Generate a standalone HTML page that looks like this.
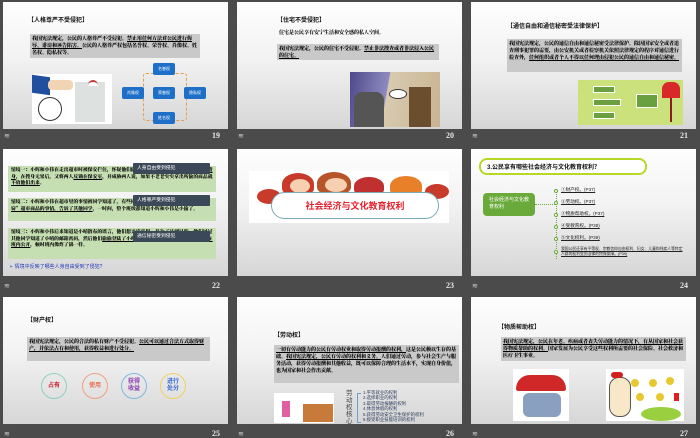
<!DOCTYPE html>
<html><head><meta charset="utf-8"><style>
*{margin:0;padding:0;box-sizing:border-box}
body{width:700px;height:438px;background:#4b4b4b;position:relative;overflow:hidden;font-family:"Liberation Sans","Noto Sans CJK SC",sans-serif}
.s{position:absolute;width:225px;height:127px;background:linear-gradient(#fefefe 0%,#f2f2f2 45%,#d6d6d6 100%);overflow:hidden}
.s>*{position:absolute}
.n{position:absolute;color:#e8e8e8;font-size:8px;font-weight:bold;font-family:"Liberation Serif",serif}
.ic{position:absolute;color:#cfcfcf;font-size:7px}
.t{font-size:6px;font-weight:bold;color:#111;white-space:nowrap;font-family:"Liberation Sans","Noto Sans CJK SC",sans-serif}
.g{background:#c9c9c9;font-size:5px;line-height:7px;color:#000;padding:1px 2px;font-family:"Noto Serif CJK SC",serif;font-weight:900;overflow:hidden}
.b{background:#1d6fc8;color:#fff;font-size:4px;border-radius:2px;text-align:center;line-height:12px;width:22px;height:12px}
.gr{background:#c6dfb2;font-size:4.8px;line-height:6.5px;color:#000;padding:1px 3px;font-family:"Noto Serif CJK SC",serif;font-weight:900;overflow:hidden}
.dk{background:#3b4857;color:#fff;font-size:4.8px;line-height:11px;padding-left:4px;width:77px;height:11px;border-radius:1px}
.li{font-size:4.6px;color:#222;text-decoration:underline;white-space:nowrap}
.dot{width:4px;height:4px;border:1px solid #6aaa3a;border-radius:50%;background:#fff}
.c{width:26px;height:26px;border-radius:50%;border:1px solid;text-align:center;font-weight:bold;display:flex;align-items:center;justify-content:center;font-size:6px;line-height:7px}
</style></head><body>

<!-- 19 -->
<div class="s" style="left:3px;top:2px">
<div class="t" style="left:25px;top:13px">【人格尊严不受侵犯】</div>
<div class="g" style="left:27px;top:32px;width:170px;height:24px">我国宪法规定，公民的人格尊严不受侵犯。<u>禁止用任何方法对公民进行侮辱、诽谤和诬告陷害。</u>公民的人格尊严权包括名誉权、荣誉权、肖像权、姓名权、隐私权等。</div>
<div style="left:29px;top:72px;width:80px;height:50px;background:#fff"></div>
<div style="left:29px;top:74px;width:18px;height:18px;background:#1f4f9e;transform:skewY(8deg)"></div>
<div style="left:45px;top:78px;width:25px;height:10px;background:#f2d4b4;border-radius:4px"></div>
<div style="left:35px;top:95px;width:24px;height:24px;border:1px solid #333;border-radius:50%;background:#fff"></div>
<div style="left:72px;top:80px;width:30px;height:40px;background:#dde2e0"></div>
<div style="left:85px;top:78px;width:10px;height:6px;background:#fff;border-radius:5px 5px 0 0;border-top:2px solid #c33"></div>
<div style="left:140px;top:71px;width:44px;height:48px;border:1px dashed #e0a050;border-radius:3px"></div>
<div class="b" style="left:150px;top:61px">名誉权</div>
<div class="b" style="left:119px;top:85px">肖像权</div>
<div class="b" style="left:150px;top:85px">荣誉权</div>
<div class="b" style="left:181px;top:85px">隐私权</div>
<div class="b" style="left:150px;top:110px">姓名权</div>
</div>
<div class="ic" style="left:4px;top:132px">≋</div><div class="n" style="left:212px;top:131px">19</div>

<!-- 20 -->
<div class="s" style="left:237px;top:2px">
<div class="t" style="left:40px;top:13px">【住宅不受侵犯】</div>
<div class="t" style="left:42px;top:27px;font-size:5px;font-family:'Noto Serif CJK SC',serif;font-weight:900">住宅是公民享有安宁生活和安全感的私人空间。</div>
<div class="g" style="left:40px;top:42px;width:162px;height:16px">我国宪法规定，公民的住宅不受侵犯。<u>禁止非法搜查或者非法侵入公民的住宅。</u></div>
<div style="left:113px;top:70px;width:90px;height:55px;background:linear-gradient(100deg,#4e4a8a 0%,#8e8ac0 40%,#d8cab0 41%,#c9b490 100%)"></div>
<div style="left:172px;top:85px;width:22px;height:40px;background:#6a4e2e"></div>
<div style="left:117px;top:90px;width:30px;height:35px;background:#555;border-radius:8px 8px 0 0"></div>
<div style="left:152px;top:87px;width:18px;height:10px;background:#fff;border-radius:50%;border:1px solid #333"></div>
</div>
<div class="ic" style="left:238px;top:132px">≋</div><div class="n" style="left:446px;top:131px">20</div>

<!-- 21 -->
<div class="s" style="left:471px;top:2px">
<div class="t" style="left:36px;top:19px">【通信自由和通信秘密受法律保护】</div>
<div class="g" style="left:36px;top:37px;width:175px;height:33px">我国宪法规定，公民的通信自由和通信秘密受法律保护。除因国家安全或者追查刑事犯罪的需要，由公安机关或者检察机关依照法律规定的程序对通信进行检查外，<u>任何组织或者个人不得以任何理由侵犯公民的通信自由和通信秘密。</u></div>
<div style="left:107px;top:78px;width:105px;height:45px;background:#cbe27c"></div>
<div style="left:122px;top:84px;width:22px;height:7px;background:#6aa040;border:1px solid #fff"></div>
<div style="left:122px;top:97px;width:28px;height:7px;background:#6aa040;border:1px solid #fff"></div>
<div style="left:122px;top:110px;width:22px;height:7px;background:#6aa040;border:1px solid #fff"></div>
<div style="left:165px;top:92px;width:22px;height:14px;background:#6aa040;border:1px solid #fff"></div>
<div style="left:191px;top:80px;width:18px;height:16px;background:#d8282a;border-radius:7px 7px 0 0"></div>
<div style="left:199px;top:96px;width:2px;height:24px;background:#8b1e1e"></div>
</div>
<div class="ic" style="left:472px;top:132px">≋</div><div class="n" style="left:680px;top:131px">21</div>

<!-- 22 -->
<div class="s" style="left:3px;top:149px">
<div class="gr" style="left:5px;top:17px;width:208px;height:26px">情境一：小辉和小伟在走出超市时被保安拦住，怀疑他们偷拿了超市的商品而对他们<u>当众强制搜身</u>，在搜身无果后，又将两人<u>反锁在保安室</u>，并威胁两人说，如果不老老实实拿出所偷的商品就<u>不放他们出来</u>。</div>
<div class="gr" style="left:5px;top:49px;width:208px;height:23px">情境二：小辉和小伟在超市里的事情被同学知道了，有些同学<u>添油加醋，将小辉和小伟“偷窃”超市商品的事情，告诉了其他同学</u>，一时间，整个班级都知道小辉和小伟是小偷了。</div>
<div class="gr" style="left:5px;top:79px;width:208px;height:31px">情境三：小辉和小伟后来知道是小晴散布的谣言，他们想弄清真相。并为了达到目的，他们通过其他同学知道了小晴的邮箱密码，然后他们<u>偷偷登陆了小晴的邮箱，并下载了她的交往邮件，在班内公开</u>，顿时班内像炸了锅一样。</div>
<div class="dk" style="left:130px;top:14px">人身自由受到侵犯</div>
<div class="dk" style="left:130px;top:46px">人格尊严受到侵犯</div>
<div class="dk" style="left:130px;top:82px">通信秘密受到侵犯</div>
<div style="left:6px;top:114px;font-size:5px;color:#2438b8;white-space:nowrap">➢ 情境中反映了哪些人身自由受到了侵犯?</div>
</div>
<div class="ic" style="left:4px;top:282px">≋</div><div class="n" style="left:212px;top:281px">22</div>

<!-- 23 -->
<div class="s" style="left:237px;top:149px">
<div style="left:12px;top:22px;width:200px;height:52px;background:#fff"></div>
<div style="left:45px;top:24px;width:32px;height:22px;background:#c83a2a;border-radius:50% 50% 30% 30%"></div>
<div style="left:53px;top:30px;width:20px;height:14px;background:#f6d0b0;border-radius:50%"></div>
<div style="left:80px;top:23px;width:34px;height:22px;background:#b8542a;border-radius:50% 50% 30% 30%"></div>
<div style="left:88px;top:29px;width:22px;height:14px;background:#f6d0b0;border-radius:50%"></div>
<div style="left:117px;top:28px;width:30px;height:18px;background:#c03030;border-radius:50% 50% 30% 30%"></div>
<div style="left:153px;top:27px;width:32px;height:20px;background:#e8802a;border-radius:50% 50% 30% 30%"></div>
<div style="left:188px;top:35px;width:24px;height:15px;background:#c83a2a;border-radius:50%"></div>
<div style="left:20px;top:40px;width:24px;height:15px;background:#c83a2a;border-radius:50%"></div>
<div style="left:34px;top:43px;width:168px;height:27px;background:#fff;border:1px solid #7aa8b8;border-radius:14px"></div>
<div style="left:34px;top:50px;width:168px;text-align:center;font-size:9px;font-weight:bold;color:#e8202c;font-family:'Noto Sans CJK SC',sans-serif">社会经济与文化教育权利</div>
</div>
<div class="n" style="left:446px;top:281px">23</div>

<!-- 24 -->
<div class="s" style="left:471px;top:149px">
<div style="left:8px;top:9px;width:168px;height:17px;background:#fff;border:2px solid #b8d828;border-radius:8px"></div>
<div class="t" style="left:16px;top:13px">3.公民享有哪些社会经济与文化教育权利？</div>
<div style="left:12px;top:44px;width:52px;height:23px;background:#6aaa3a;border-radius:4px;color:#fff;font-size:5px;line-height:7px;padding:4px 6px">社会经济与文化教育权利</div>
<div style="left:64px;top:55px;width:20px;border-top:1px dotted #6aaa3a"></div>
<div style="left:85px;top:40px;height:70px;border-left:1px dotted #6aaa3a"></div>
<div class="dot" style="left:83px;top:40px"></div><div class="li" style="left:90px;top:38px">①财产权。(P37)</div>
<div class="dot" style="left:83px;top:52px"></div><div class="li" style="left:90px;top:50px">②劳动权。(P37)</div>
<div class="dot" style="left:83px;top:64px"></div><div class="li" style="left:90px;top:62px">③物质帮助权。(P37)</div>
<div class="dot" style="left:83px;top:76px"></div><div class="li" style="left:90px;top:74px">④受教育权。(P38)</div>
<div class="dot" style="left:83px;top:88px"></div><div class="li" style="left:90px;top:86px">⑤文化权利。(P39)</div>
<div class="dot" style="left:83px;top:101px"></div><div class="li" style="left:90px;top:98px;font-size:3.8px;line-height:4.5px;white-space:normal;width:125px">我国公民还享有平等权、宗教信仰自由权利、妇女、儿童和残疾人等特定人群的权利受到法律的特殊保障。(P39)</div>
</div>
<div class="ic" style="left:472px;top:282px">≋</div><div class="n" style="left:680px;top:281px">24</div>

<!-- 25 -->
<div class="s" style="left:3px;top:297px">
<div class="t" style="left:24px;top:18px">【财产权】</div>
<div class="g" style="left:24px;top:40px;width:183px;height:24px">我国宪法规定，公民的合法的私有财产不受侵犯。<u>公民可以通过合法方式取得财产，并依法占有和使用，获得收益和进行处分。</u></div>
<div class="c" style="left:38px;top:76px;border-color:#8fd0c0;color:#c8202a">占有</div>
<div class="c" style="left:79px;top:76px;border-color:#f0a080;color:#e87050">使用</div>
<div class="c" style="left:118px;top:76px;border-color:#80b8e0;color:#8a3cb0">获得<br>收益</div>
<div class="c" style="left:157px;top:76px;border-color:#f0d060;color:#3a6ad0">进行<br>处分</div>
</div>
<div class="ic" style="left:4px;top:430px">≋</div><div class="n" style="left:212px;top:429px">25</div>

<!-- 26 -->
<div class="s" style="left:237px;top:297px">
<div class="t" style="left:37px;top:33px">【劳动权】</div>
<div class="g" style="left:37px;top:48px;width:185px;height:38px"><u>一切有劳动能力的公民有劳动权业和取得劳动报酬的权利，</u>这是公民赖以生存的基础。<u>我国宪法规定，公民有劳动的权利和义务。</u>人们通过劳动，参与社会生产与服务活动，获得劳动报酬和其他收益，既可以保障合理的生活水平，实现自身价值，也为国家和社会作出贡献。</div>
<div style="left:37px;top:96px;width:60px;height:30px;background:#fff"></div>
<div style="left:66px;top:107px;width:30px;height:18px;background:#c87a3a"></div>
<div style="left:45px;top:104px;width:8px;height:16px;background:#e060a0"></div>
<div style="left:109px;top:93px;width:8px;font-size:6.5px;line-height:7px;color:#444;white-space:normal">劳动权核心内容</div>
<div style="left:120px;top:96px;width:4px;height:30px;border:1px solid #6aa0d0;border-right:none"></div>
<div style="left:126px;top:93px;font-size:4.4px;line-height:5.4px;color:#2a3a5a;white-space:nowrap">1.平等就业的权利<br>2.选择职业的权利<br>3.取得劳动报酬的权利<br>4.休息休假的权利<br>5.获得劳动安全卫生保护的权利<br>6.接受职业技能培训的权利</div>
</div>
<div class="ic" style="left:238px;top:430px">≋</div><div class="n" style="left:446px;top:429px">26</div>

<!-- 27 -->
<div class="s" style="left:471px;top:297px">
<div class="t" style="left:27px;top:25px">【物质帮助权】</div>
<div class="g" style="left:30px;top:40px;width:185px;height:24px"><u>我国宪法规定，公民在年老、疾病或者丧失劳动能力的情况下，有从国家和社会获得物质帮助的权利。</u>国家发展为公民享受这些权利所需要的社会保险、社会救济和医疗卫生事业。</div>
<div style="left:42px;top:72px;width:56px;height:52px;background:#fff"></div>
<div style="left:45px;top:78px;width:50px;height:16px;background:#d02828;border-radius:25px 25px 4px 4px"></div>
<div style="left:52px;top:96px;width:38px;height:24px;background:#8aa0c0;border-radius:6px"></div>
<div style="left:135px;top:72px;width:78px;height:52px;background:#fff"></div>
<div style="left:138px;top:80px;width:22px;height:40px;background:#f8e8c8;border-radius:10px;border:1px solid #555"></div>
<div style="left:140px;top:75px;width:12px;height:6px;background:#d02020;border-radius:4px"></div>
<div style="left:170px;top:110px;width:40px;height:14px;background:#9ad040;border-radius:50%"></div>
<div style="left:160px;top:82px;width:8px;height:8px;background:#e8c830;border-radius:50%"></div>
<div style="left:178px;top:82px;width:8px;height:8px;background:#e8c830;border-radius:50%"></div>
<div style="left:195px;top:80px;width:8px;height:8px;background:#e8c830;border-radius:50%"></div>
<div style="left:165px;top:96px;width:8px;height:8px;background:#e8c830;border-radius:50%"></div>
<div style="left:185px;top:96px;width:8px;height:8px;background:#e8c830;border-radius:50%"></div>
<div style="left:203px;top:96px;width:5px;height:8px;background:#e02020"></div>
</div>
<div class="ic" style="left:472px;top:430px">≋</div><div class="n" style="left:680px;top:429px">27</div>

</body></html>
